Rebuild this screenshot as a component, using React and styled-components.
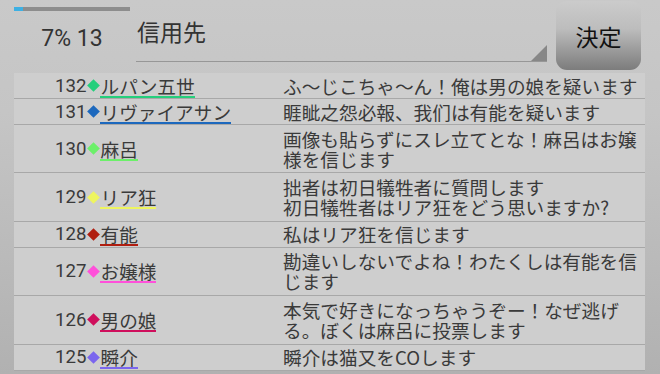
import React from 'react';
import styled, { createGlobalStyle } from 'styled-components';

const GlobalStyle = createGlobalStyle`
  html, body {
    margin: 0;
    padding: 0;
  }
  body {
    width: 660px;
    height: 374px;
    overflow: hidden;
    background: linear-gradient(#c9c9c9 0%, #c5c5c5 30%, #b1b1b1 100%);
    font-family: Roboto, "Noto Sans CJK JP", sans-serif;
    color: #3a3a3a;
  }
`;

const rows = [
  { no: 132, name: 'ルパン五世', color: '#25cf7c', text: 'ふ〜じこちゃ〜ん！俺は男の娘を疑います' },
  { no: 131, name: 'リヴァイアサン', color: '#1c68bd', text: '睚眦之怨必報、我们は有能を疑います' },
  { no: 130, name: '麻呂', color: '#6cf06a', text: '画像も貼らずにスレ立てとな！麻呂はお嬢様を信じます', tall: true },
  { no: 129, name: 'リア狂', color: '#eef55f', text: '拙者は初日犠牲者に質問します\n初日犠牲者はリア狂をどう思いますか?', tall: true },
  { no: 128, name: '有能', color: '#b01e10', text: '私はリア狂を信じます' },
  { no: 127, name: 'お嬢様', color: '#ff50da', text: '勘違いしないでよね！わたくしは有能を信じます', tall: true },
  { no: 126, name: '男の娘', color: '#cf0f5c', text: '本気で好きになっちゃうぞー！なぜ逃げる。ぼくは麻呂に投票します', tall: true },
  { no: 125, name: '瞬介', color: '#7b66ee', text: '瞬介は猫又をCOします' },
];

function App() {
  return (
    <>
      <GlobalStyle />
      <Screen>
        <TopBar>
          <Status>
            <Progress>
              <ProgressFill style={{ width: '8%' }} />
            </Progress>
            <StatusText>7% 13</StatusText>
          </Status>
          <Target>
            <TargetText>信用先</TargetText>
          </Target>
          <DecideButton>決定</DecideButton>
        </TopBar>
        <List>
          {rows.map(r => (
            <Row key={r.no} tall={r.tall}>
              <Speaker>
                <Number>{r.no}</Number>
                <Diamond>
                  <DiamondShape color={r.color} />
                </Diamond>
                <Name color={r.color}>{r.name}</Name>
              </Speaker>
              <Message>{r.text}</Message>
            </Row>
          ))}
        </List>
      </Screen>
    </>
  );
}

const Screen = styled.div`
  width: 660px;
  height: 374px;
  display: flex;
  flex-direction: column;
`

const TopBar = styled.div`
  height: 73px;
  flex-shrink: 0;
  display: flex;
  align-items: flex-start;
  padding-left: 14px;
  box-sizing: border-box;
`

const Status = styled.div`
  width: 116px;
  display: flex;
  flex-direction: column;
  padding-top: 7px;
`

const Progress = styled.div`
  height: 4px;
  background: #8d8d8d;
`

const ProgressFill = styled.div`
  height: 100%;
  background: #3db0e3;
`

const StatusText = styled.div`
  margin-top: 14px;
  font-family: Roboto, sans-serif;
  font-size: 23px;
  line-height: 27px;
  text-align: center;
  color: #333;
`

const Target = styled.div`
  position: relative;
  margin-left: 6px;
  width: 411px;
  height: 61.5px;
  box-sizing: border-box;
  padding-top: 15px;
  padding-left: 1px;
  border-bottom: 1px solid #979797;

  &::after {
    content: '';
    position: absolute;
    right: 0;
    bottom: 0;
    width: 0;
    height: 0;
    border-style: solid;
    border-width: 0 0 16px 16px;
    border-color: transparent transparent #878787 transparent;
  }
`

const TargetText = styled.div`
  font-family: "Noto Sans CJK JP", sans-serif;
  font-size: 23px;
  line-height: 33px;
  color: #333;
`

const DecideButton = styled.div`
  margin-top: 1px;
  margin-left: 9px;
  width: 85px;
  height: 69px;
  border-radius: 11px;
  background: linear-gradient(#cbcbcb 0%, #bdbdbd 40%, #7c7c7c 100%);
  display: flex;
  align-items: center;
  justify-content: center;
  font-family: "Noto Sans CJK JP", sans-serif;
  font-size: 23px;
  color: #111;
`

const List = styled.div`
  margin-left: 14px;
  width: 631px;
  background: #cecece;
`

const Row = styled.div`
  display: grid;
  grid-template-columns: 269px 1fr;
  align-items: center;
  padding: ${props => (props.tall ? '3.7px 0' : '1.5px 0')};
  border-bottom: 1px solid #a8a8a8;
  font-size: 18.67px;
`

const Speaker = styled.div`
  display: flex;
  align-items: center;
  padding-left: 41px;
  height: 22px;
`

const Number = styled.span`
  font-family: Roboto, sans-serif;
  line-height: 20px;
  color: #3a3a3a;
`

const Diamond = styled.span`
  width: 14px;
  height: 14px;
  display: flex;
  align-items: center;
  justify-content: center;
`

const DiamondShape = styled.span`
  width: 9px;
  height: 9px;
  background: ${props => props.color};
  transform: rotate(45deg);
`

const Name = styled.span`
  font-family: "Noto Sans CJK JP", sans-serif;
  line-height: 20px;
  margin-top: 2px;
  border-bottom: 2px solid ${props => props.color};
  color: #3a3a3a;
`

const Message = styled.div`
  font-family: "Noto Sans CJK JP", sans-serif;
  line-height: 20px;
  white-space: pre-line;
  color: #3a3a3a;
`

export default App;
